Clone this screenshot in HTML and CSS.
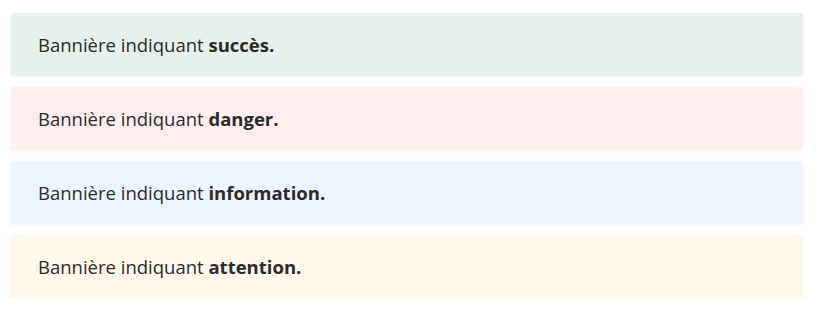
FILE: index.html
```html
<!DOCTYPE html>
<html lang="fr">
<head>
    <meta charset="UTF-8">
    <meta name="viewport" content="width=device-width, initial-scale=1.0">
    <title>Bannières</title>
    <link rel="stylesheet" href="styles.css">
</head>
<body>
    <div class="banners">
        <div class="banner banner-success">Bannière indiquant <strong>succès.</strong></div>
        <div class="banner banner-danger">Bannière indiquant <strong>danger.</strong></div>
        <div class="banner banner-info">Bannière indiquant <strong>information.</strong></div>
        <div class="banner banner-warning">Bannière indiquant <strong>attention.</strong></div>
    </div>
</body>
</html>
```

FILE: styles.css
```css
body {
    font-family: 'Open Sans', 'Noto Sans', sans-serif;
    background: #fff;
    margin: 0;
    padding: 13px 15px 0 11px;
}

.banners {
    display: flex;
    flex-direction: column;
    gap: 11px;
}

.banner {
    height: 63px;
    box-sizing: border-box;
    padding: 1px 27px 0;
    line-height: 62px;
    font-size: 18.5px;
    color: #2b2b2b;
    border-radius: 3px;
    box-shadow: 0 1px 4px rgba(0, 0, 0, 0.05);
    white-space: nowrap;
}

.banner strong {
    font-weight: 700;
}

.banner-success { background: #e8f0ec; }
.banner-danger  { background: #ffeeef; }
.banner-info    { background: #edf5ff; }
.banner-warning { background: #fff8ed; }
```
